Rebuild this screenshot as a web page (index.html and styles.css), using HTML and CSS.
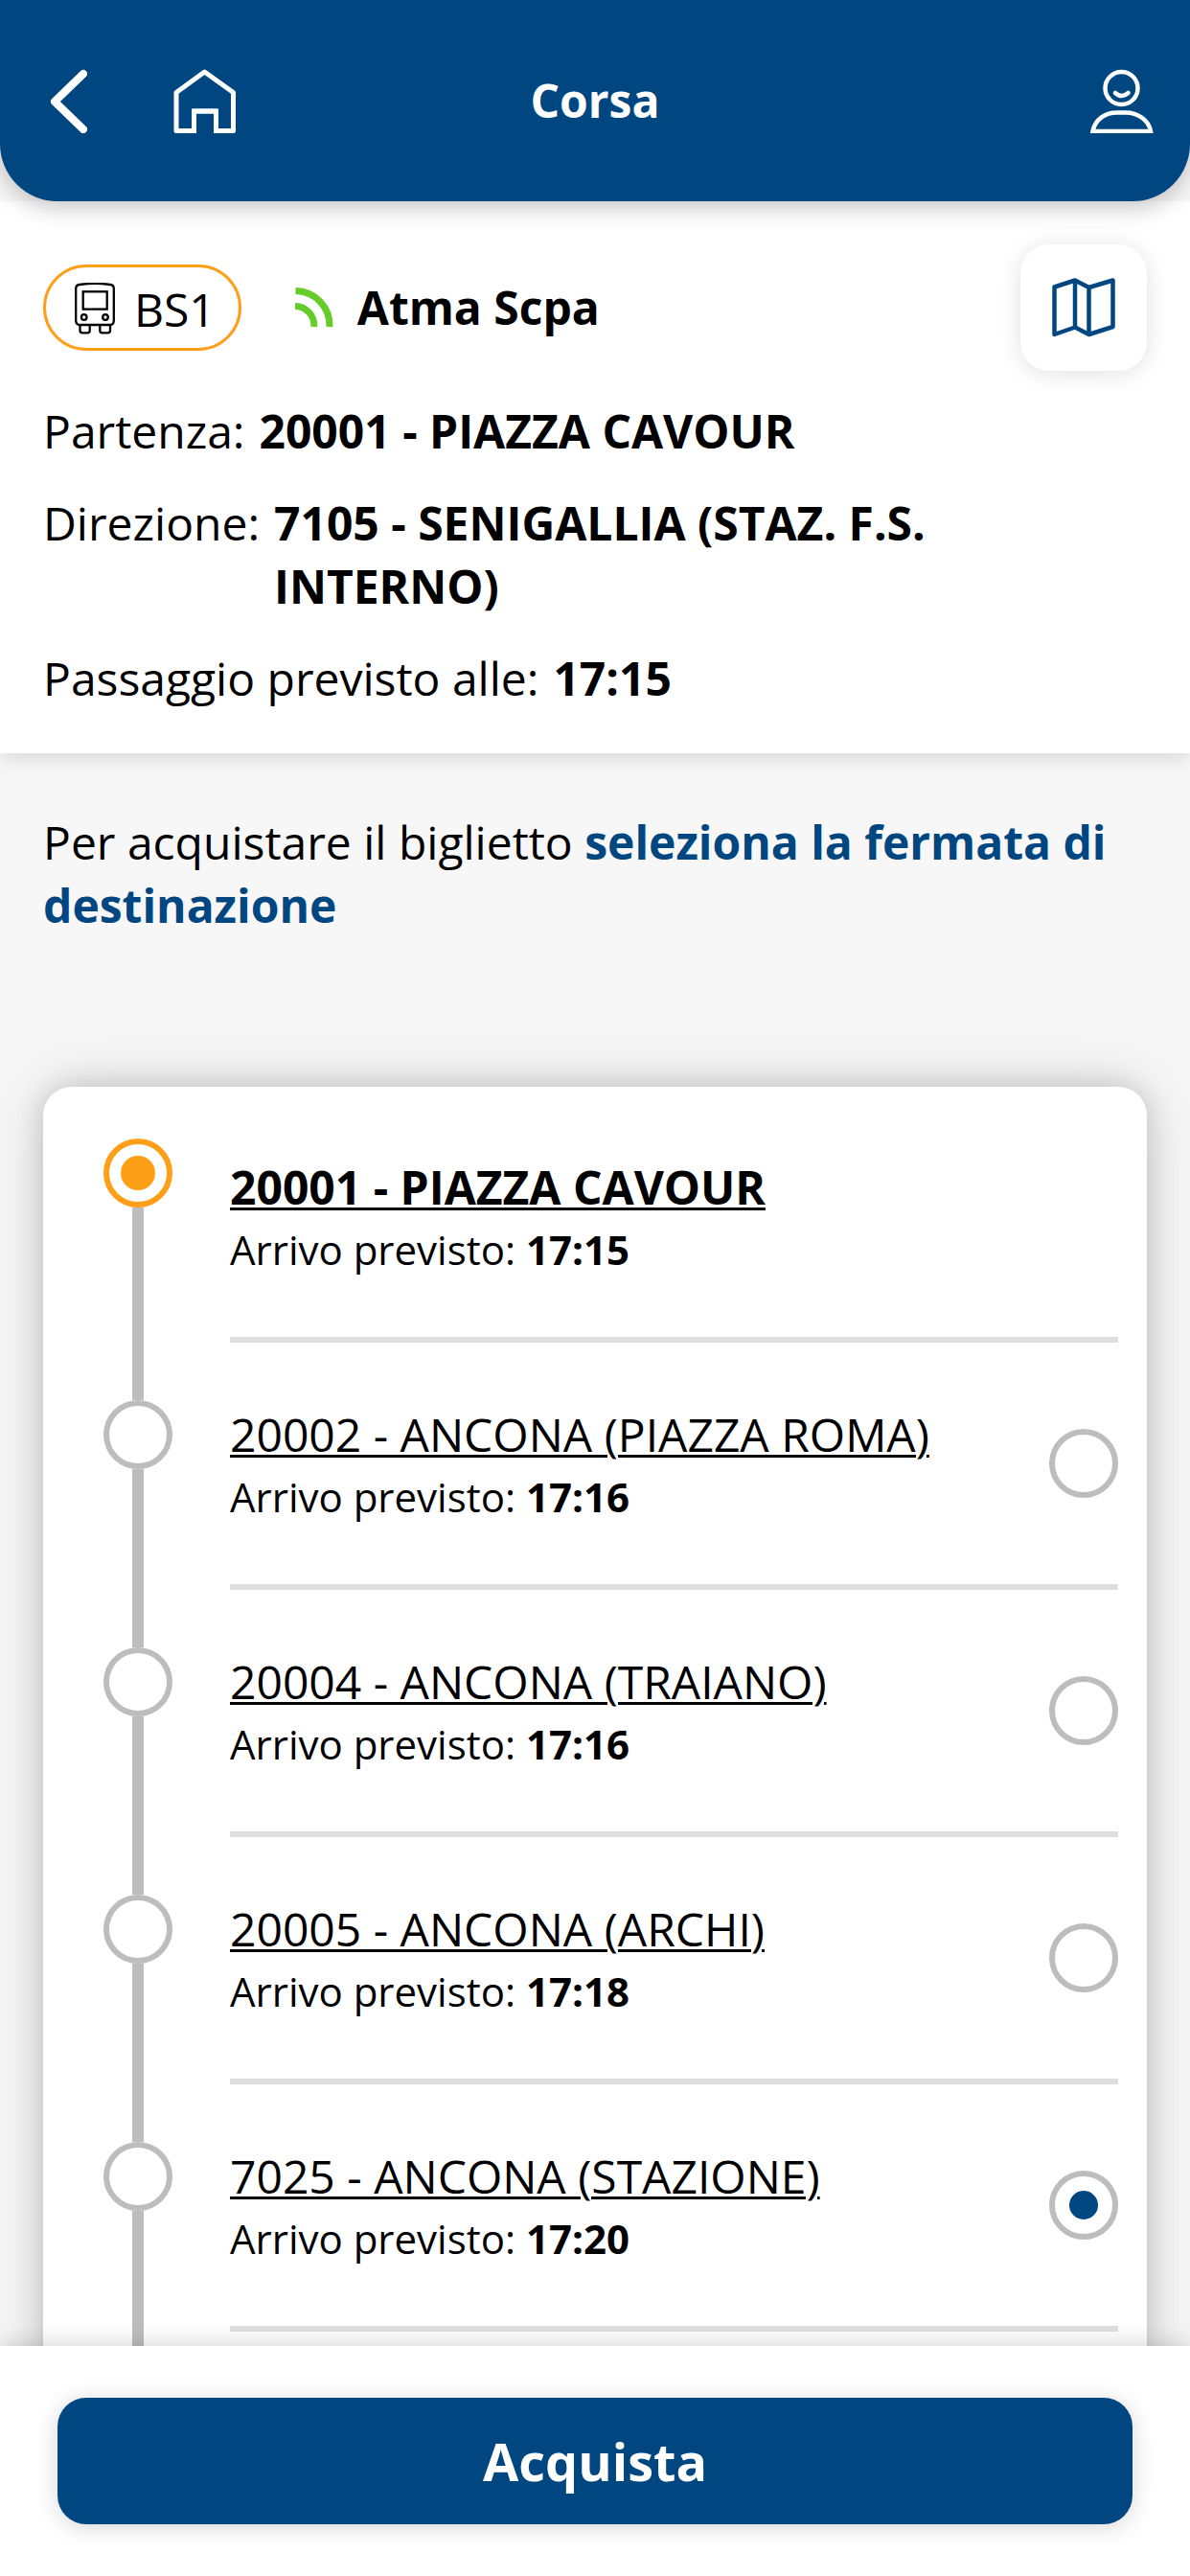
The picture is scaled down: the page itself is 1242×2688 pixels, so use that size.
FILE: index.html
```html
<!DOCTYPE html>
<html lang="it">
<head>
    <meta charset="UTF-8">
    <meta name="viewport" content="width=device-width, initial-scale=1.0">
    <title>Corsa</title>
    <link rel="stylesheet" href="styles.css">
</head>
<body>
    <header class="topbar">
        <nav class="topbar-left">
            <a class="icon-link" href="#" aria-label="Indietro">
                <svg class="icon-back" viewBox="0 -1 40 68" fill="none" stroke="#fff" stroke-width="8" stroke-linecap="round" stroke-linejoin="round">
                    <path d="M36 5L6 34L36 63"/>
                </svg>
            </a>
            <a class="icon-link" href="#" aria-label="Home">
                <svg class="icon-home" viewBox="0 -1 66 68" fill="none" stroke="#fff" stroke-width="5" stroke-linejoin="round">
                    <path d="M3 24.500L32.500 3L62.500 24.500V64.500H44.500V44H21.500V64.500H3Z"/>
                    <path d="M16 64.500H21.500V44H44.500V64.500H50" stroke-linejoin="miter"/>
                </svg>
            </a>
        </nav>
        <h1 class="topbar-title">Corsa</h1>
        <a class="icon-link topbar-right" href="#" aria-label="Profilo">
            <svg class="icon-user" viewBox="0 -1 66 68" fill="none" stroke="#fff" stroke-width="4.500">
                <circle cx="32.500" cy="20" r="17"/>
                <path d="M26 25Q32.500 31 39.500 25" stroke-linecap="round"/>
                <path d="M2.500 65C5 52 16 45.500 28 45.500H37C49 45.500 61 53 63 65Z"/>
            </svg>
        </a>
    </header>

    <main class="content">
        <section class="trip">
            <div class="trip-head">
                <span class="line-badge">
                    <svg class="icon-bus" viewBox="0 1 42 56" fill="none" stroke="#000" stroke-width="2.300" stroke-linejoin="round">
                        <path d="M1.200 7Q1.200 3.500 5 3Q21 0.800 37 3Q40.800 3.500 40.800 7V40.500Q40.800 45 36.500 45H5.500Q1.200 45 1.200 40.500Z"/>
                        <rect x="8.700" y="10.300" width="25" height="18.300" stroke-linejoin="miter"/>
                        <circle cx="9.700" cy="37" r="2.800"/>
                        <circle cx="32" cy="37" r="2.800"/>
                        <path d="M5.500 45V51Q5.500 53.300 8 53.300H13.500Q15.700 53.300 15.700 51V45M26.300 45V51Q26.300 53.300 28.500 53.300H34.500Q37 53.300 37 51V45"/>
                    </svg>
                    BS1
                </span>
                <svg class="icon-live" viewBox="0 0 44 44" fill="none" stroke="#66cc29" stroke-width="7">
                    <path d="M2.500 4.500A36 36 0 0 1 38 42"/>
                    <path d="M2 20.500A20 20 0 0 1 21.700 42"/>
                </svg>
                <strong class="operator">Atma Scpa</strong>
                <button class="map-button" type="button" aria-label="Mappa">
                    <svg class="icon-map" viewBox="0 0 66 62" fill="none" stroke="#004680" stroke-width="4.500" stroke-linejoin="round">
                        <path d="M2.500 9.500L24 2.500L38.500 10L63.500 2.500V51L38.500 59L24 51.500L2.500 59ZM24 2.500V51.500M38.500 10V59"/>
                    </svg>
                </button>
            </div>
            <p class="trip-row"><span>Partenza:</span> <strong>20001 - PIAZZA CAVOUR</strong></p>
            <p class="trip-row trip-row-narrow"><span>Direzione:</span> <strong>7105 - SENIGALLIA (STAZ. F.S. INTERNO)</strong></p>
            <p class="trip-row"><span>Passaggio previsto alle:</span> <strong>17:15</strong></p>
        </section>

        <p class="hint">Per acquistare il biglietto <strong>seleziona la fermata di destinazione</strong></p>

        <ul class="stops">
            <li class="stop stop-current">
                <span class="rail"><span class="node"></span></span>
                <div class="stop-body">
                    <div class="stop-text">
                        <a class="stop-name" href="#">20001 - PIAZZA CAVOUR</a>
                        <p class="stop-time">Arrivo previsto: <strong>17:15</strong></p>
                    </div>
                </div>
            </li>
            <li class="stop">
                <span class="rail"><span class="node"></span></span>
                <div class="stop-body">
                    <div class="stop-text">
                        <a class="stop-name" id="stop-20002" href="#">20002 - ANCONA (PIAZZA ROMA)</a>
                        <p class="stop-time">Arrivo previsto: <strong>17:16</strong></p>
                    </div>
                    <input class="stop-radio" type="radio" name="destinazione" aria-labelledby="stop-20002">
                </div>
            </li>
            <li class="stop">
                <span class="rail"><span class="node"></span></span>
                <div class="stop-body">
                    <div class="stop-text">
                        <a class="stop-name" id="stop-20004" href="#">20004 - ANCONA (TRAIANO)</a>
                        <p class="stop-time">Arrivo previsto: <strong>17:16</strong></p>
                    </div>
                    <input class="stop-radio" type="radio" name="destinazione" aria-labelledby="stop-20004">
                </div>
            </li>
            <li class="stop">
                <span class="rail"><span class="node"></span></span>
                <div class="stop-body">
                    <div class="stop-text">
                        <a class="stop-name" id="stop-20005" href="#">20005 - ANCONA (ARCHI)</a>
                        <p class="stop-time">Arrivo previsto: <strong>17:18</strong></p>
                    </div>
                    <input class="stop-radio" type="radio" name="destinazione" aria-labelledby="stop-20005">
                </div>
            </li>
            <li class="stop">
                <span class="rail"><span class="node"></span></span>
                <div class="stop-body">
                    <div class="stop-text">
                        <a class="stop-name" id="stop-7025" href="#">7025 - ANCONA (STAZIONE)</a>
                        <p class="stop-time">Arrivo previsto: <strong>17:20</strong></p>
                    </div>
                    <input class="stop-radio" type="radio" name="destinazione" aria-labelledby="stop-7025" checked>
                </div>
            </li>
            <li class="stop stop-more">
                <span class="rail"></span>
            </li>
        </ul>
    </main>

    <footer class="buy-bar">
        <button class="buy-button" type="button">Acquista</button>
    </footer>
</body>
</html>
```
FILE: styles.css
```css
* {
    box-sizing: border-box;
}
body {
    display: flex;
    flex-direction: column;
    height: 100vh;
    margin: 0;
    font-family: 'Open Sans', sans-serif;
    font-size: 48px;
    line-height: 66px;
    color: #000;
    background-color: #f7f7f7;
}
p, h1, ul {
    margin: 0;
    padding: 0;
}
svg {
    display: block;
    flex: none;
}

/* Top bar */
.topbar {
    position: relative;
    z-index: 2;
    display: grid;
    grid-template-columns: 1fr auto 1fr;
    align-items: center;
    height: 210px;
    padding: 0 38px;
    color: #fff;
    background-color: #004680;
    border-radius: 0 0 60px 60px;
    box-shadow: 0 6px 24px rgba(0, 0, 0, 0.24);
}
.topbar-left {
    display: flex;
    gap: 90px;
    padding-left: 13px;
}
.topbar-title {
    font-size: 48px;
    line-height: 66px;
}
.topbar-right {
    justify-self: end;
}
.icon-back {
    width: 40px;
    height: 68px;
}
.icon-home, .icon-user {
    width: 66px;
    height: 68px;
}

/* Trip summary */
.content {
    display: flex;
    flex-direction: column;
    flex: 1;
    min-height: 0;
    overflow: hidden;
}
.trip {
    display: flex;
    flex-direction: column;
    gap: 30px;
    flex: none;
    padding: 45px;
    background-color: #fff;
    box-shadow: 0 6px 18px rgba(0, 0, 0, 0.12);
}
.trip-head {
    display: flex;
    align-items: center;
}
.line-badge {
    display: flex;
    align-items: center;
    gap: 20px;
    height: 90px;
    padding: 3px 24px 0 30px;
    border: 3px solid #ff9f18;
    border-radius: 45px;
}
.icon-bus {
    width: 42px;
    height: 56px;
}
.icon-live {
    width: 44px;
    height: 44px;
    margin: 0 23px 0 54px;
}
.map-button {
    display: flex;
    align-items: center;
    justify-content: center;
    width: 132px;
    height: 132px;
    margin-left: auto;
    padding: 0;
    border: 0;
    border-radius: 30px;
    background-color: #fff;
    box-shadow: 0 3px 24px rgba(0, 0, 0, 0.12);
}
.icon-map {
    width: 66px;
    height: 62px;
}
.trip-row {
    display: flex;
    gap: 15px;
}
.trip-row-narrow {
    padding-right: 132px;
}
.trip-row span {
    flex: none;
}
.hint {
    padding: 60px 45px 0;
}
.hint strong {
    color: #004680;
}

/* Stop list */
.stops {
    display: flex;
    flex-direction: column;
    flex: 1 0 auto;
    margin: 156px 45px 0;
    padding: 9px 30px 0 63px;
    list-style: none;
    background-color: #fff;
    border-radius: 30px 30px 0 0;
    box-shadow: 0 0 30px rgba(0, 0, 0, 0.15), 0 0 66px rgba(0, 0, 0, 0.15);
}
.stop {
    display: flex;
    gap: 60px;
}
.rail {
    display: flex;
    flex-direction: column;
    align-items: center;
    flex: none;
    width: 72px;
}
.rail::before, .rail::after {
    content: '';
    width: 12px;
    background-color: #bdbdbd;
}
.rail::before {
    height: 60px;
}
.rail::after {
    flex: 1;
}
.node {
    width: 72px;
    height: 72px;
    border: 6px solid #bdbdbd;
    border-radius: 50%;
}
.stop-current .rail::before {
    height: 45px;
    background: none;
}
.stop-current .node {
    padding: 12px;
    border-color: #ff9f18;
}
.stop-current .node::before {
    content: '';
    display: block;
    height: 36px;
    border-radius: 50%;
    background-color: #ff9f18;
}
.stop-body {
    display: flex;
    align-items: center;
    flex: 1;
    border-bottom: 6px solid #dedede;
}
.stop-text {
    flex: 1;
    padding: 63px 0 60px;
}
.stop-name {
    display: block;
    color: #000;
    text-decoration-thickness: 3px;
    text-underline-offset: 3px;
}
.stop-current .stop-name {
    font-weight: bold;
}
.stop-time {
    font-size: 42px;
    line-height: 63px;
}
.stop-radio {
    display: grid;
    place-content: center;
    appearance: none;
    width: 72px;
    height: 72px;
    margin: 0;
    border: 6px solid #bdbdbd;
    border-radius: 50%;
}
.stop-radio:checked::before {
    content: '';
    width: 30px;
    height: 30px;
    border-radius: 50%;
    background-color: #004680;
}
.stop-more {
    flex: 1;
    max-height: 60px;
}

/* Purchase bar */
.buy-bar {
    position: relative;
    z-index: 1;
    padding: 54px 60px;
    background-color: #fff;
    box-shadow: 0 0 24px rgba(0, 0, 0, 0.2);
}
.buy-button {
    display: block;
    width: 100%;
    height: 132px;
    border: 0;
    border-radius: 30px;
    font-family: inherit;
    font-size: 54px;
    font-weight: bold;
    color: #fff;
    background-color: #004680;
    box-shadow: 0 3px 24px rgba(0, 0, 0, 0.16);
}
```
